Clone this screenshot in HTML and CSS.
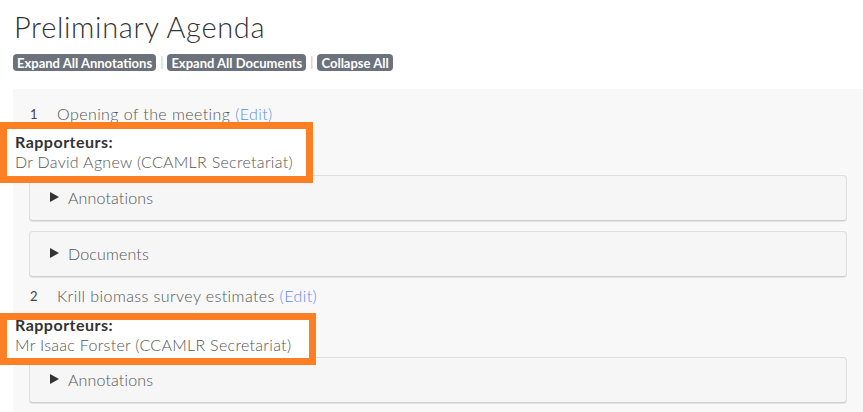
FILE: index.html
```html
<!DOCTYPE html>
<html>
<head>
<meta charset="utf-8">
<link rel="stylesheet" href="styles.css">
</head>
<body>
<div class="page">
  <h1 class="title">Preliminary Agenda</h1>
  <div class="toolbar">
    <span class="btn">Expand All Annotations</span>
    <span class="sep sep-a">|</span>
    <span class="btn">Expand All Documents</span>
    <span class="sep sep-b">|</span>
    <span class="btn">Collapse All</span>
  </div>
  <div class="agenda">
    <div class="item">
      <div class="item-head">
        <span class="num">1</span>
        <span class="item-title">Opening of the meeting <a class="edit">(Edit)</a></span>
      </div>
      <div class="rapp rapp-1">
        <div class="rapp-label">Rapporteurs:</div>
        <div class="rapp-name">Dr David Agnew (CCAMLR Secretariat)</div>
      </div>
      <div class="panel panel-after-rapp">
        <svg class="tri" width="9" height="10" viewBox="0 0 9 10"><path d="M0 0 L9 5 L0 10 Z" fill="#333"/></svg>
        <span class="panel-text">Annotations</span>
      </div>
      <div class="panel">
        <svg class="tri" width="9" height="10" viewBox="0 0 9 10"><path d="M0 0 L9 5 L0 10 Z" fill="#333"/></svg>
        <span class="panel-text">Documents</span>
      </div>
    </div>
    <div class="item item-2">
      <div class="item-head">
        <span class="num">2</span>
        <span class="item-title">Krill biomass survey estimates <a class="edit">(Edit)</a></span>
      </div>
      <div class="rapp rapp-2">
        <div class="rapp-label">Rapporteurs:</div>
        <div class="rapp-name">Mr Isaac Forster (CCAMLR Secretariat)</div>
      </div>
      <div class="panel panel-after-rapp">
        <svg class="tri" width="9" height="10" viewBox="0 0 9 10"><path d="M0 0 L9 5 L0 10 Z" fill="#333"/></svg>
        <span class="panel-text">Annotations</span>
      </div>
    </div>
  </div>
</div>
</body>
</html>
```

FILE: styles.css
```css
html, body {
  margin: 0;
  padding: 0;
  background: #fff;
}
body {
  font-family: "Lato", "Liberation Sans", sans-serif;
  color: #555;
  overflow: hidden;
}
.page {
  padding-left: 13px;
}
.title {
  margin: 0;
  padding-top: 9px;
  padding-left: 1px;
  font-size: 29px;
  font-weight: 300;
  line-height: 36px;
  color: #333;
  letter-spacing: 0.65px;
}
.toolbar {
  display: flex;
  align-items: center;
  margin-top: 9px;
  height: 17px;
}
.btn {
  display: inline-flex;
  align-items: center;
  height: 17px;
  padding: 0 4px;
  background: #6c727b;
  color: #fff;
  font-weight: 700;
  font-size: 13px;
  border-radius: 4px;
  letter-spacing: 0;
}
.sep {
  font-size: 13px;
  margin: 0 4px;
  line-height: 17px;
}
.sep-a { color: #c6cbd3; }
.sep-b { color: #f0b487; }
.agenda {
  margin-top: 18px;
  background: #f8f8f8;
  padding: 15px 16px 20px 16px;
}
.item-head {
  display: flex;
  align-items: center;
  height: 20px;
  line-height: 20px;
}
.num {
  width: 28px;
  padding-left: 1px;
  box-sizing: border-box;
  font-size: 13px;
  color: #444;
}
.item-title {
  font-size: 16px;
  font-weight: 300;
  color: #555;
  letter-spacing: 0.42px;
}
.edit {
  color: #5b8def;
}
.item-2 {
  margin-top: 9px;
}
.rapp {
  position: relative;
  z-index: 2;
  margin-left: -29px;
  box-sizing: border-box;
  border: 7px solid #fd7f24;
  background: #fff;
  padding-left: 8px;
  font-size: 16px;
  line-height: 20px;
}
.rapp-1 {
  width: 313px;
  margin-top: -2px;
  padding-top: 3px;
  padding-bottom: 4px;
}
.rapp-2 {
  width: 316px;
  margin-top: 7px;
  padding-top: 0;
  padding-bottom: 3px;
}
.rapp-2 .rapp-label {
  margin-top: -5px;
}
.rapp-label {
  font-weight: 700;
  color: #333;
  letter-spacing: 0.5px;
}
.rapp-name {
  font-weight: 300;
  color: #555;
  letter-spacing: 0.3px;
}
.panel {
  position: relative;
  z-index: 1;
  display: flex;
  align-items: center;
  gap: 9px;
  height: 46px;
  box-sizing: border-box;
  margin-top: 10px;
  padding-left: 20px;
  padding-bottom: 2px;
  background: #f6f6f6;
  border: 1px solid #dedede;
  border-bottom-color: #cfcfcf;
  border-radius: 4px;
  box-shadow: 0 1px 0 #e2e2e2;
}
.panel-after-rapp {
  margin-top: -8px;
}
.tri {
  display: block;
}
.panel-text {
  font-size: 16px;
  font-weight: 300;
  color: #555;
  letter-spacing: 0.15px;
}
```
